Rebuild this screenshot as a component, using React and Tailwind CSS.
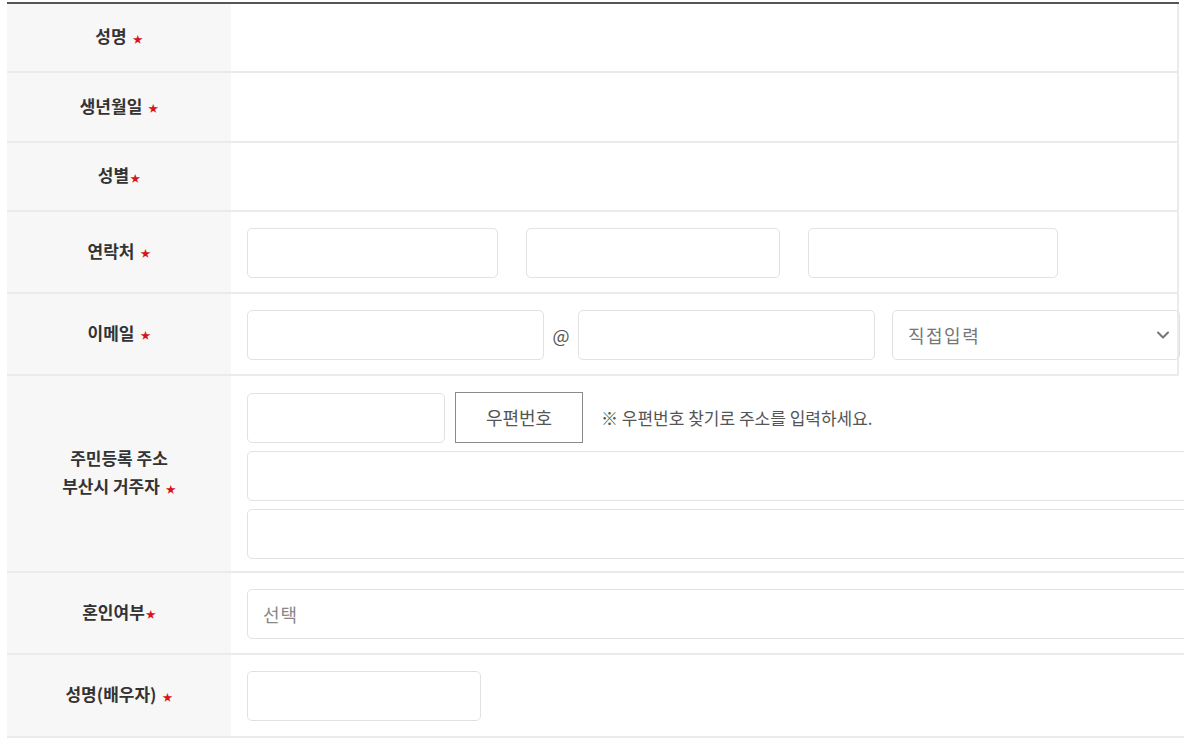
import { ChevronDown } from 'lucide-react';

const font = { fontFamily: '"Malgun Gothic", "Noto Sans CJK KR", "Noto Sans", sans-serif' };

function Star({ gap = true }) {
  return <span className={`text-[#d7141a] text-[10px] align-middle ${gap ? 'ml-[6px]' : 'ml-[1px]'}`}>★</span>;
}

function Row({ label, height, children, wide = false }) {
  return (
    <div className={`flex box-border border-b-2 border-[#ebebeb] ${height} ${wide ? 'w-[1190px]' : 'w-[1172px] border-r-2'}`}>
      <div className="w-[224px] shrink-0 bg-[#f7f7f7] flex items-center justify-center text-center text-[17px] font-bold text-[#333] leading-[28px]">
        {label}
      </div>
      <div className="flex-1 pl-4 pt-4">{children}</div>
    </div>
  );
}

function Input({ w }) {
  return <div className={`h-[50px] ${w} box-border border border-[#e2e2e2] rounded-[5px] bg-white`} />;
}

export default function App() {
  return (
    <div className="w-[1184px] h-[745px] overflow-hidden bg-white" style={font}>
      <div className="ml-[7px] mt-[2px] w-[1172px] border-t-2 border-[#555]" />
      <div className="ml-[7px]">
        <Row label={<span>성명<Star /></span>} height="h-[69px]" />
        <Row label={<span>생년월일<Star /></span>} height="h-[70px]" />
        <Row label={<span>성별<Star gap={false} /></span>} height="h-[69px]" />

        <Row label={<span>연락처<Star /></span>} height="h-[82px]">
          <div className="flex gap-[28px]">
            <Input w="w-[251px]" />
            <Input w="w-[254px]" />
            <Input w="w-[250px]" />
          </div>
        </Row>

        <Row label={<span>이메일<Star /></span>} height="h-[82px]">
          <div className="flex items-center">
            <Input w="w-[297px]" />
            <span className="w-[34px] text-center text-[18px] text-[#555]">@</span>
            <Input w="w-[297px]" />
            <div className="ml-[17px] h-[50px] w-[288px] box-border border border-[#e2e2e2] rounded-[5px] flex items-center justify-between pl-[15px] pr-[6px] text-[18px] text-[#777]">
              <span className="tracking-[1.5px]">직접입력</span>
              <ChevronDown size={20} strokeWidth={2.5} className="text-[#777]" />
            </div>
          </div>
        </Row>

        <Row
          wide
          label={<span>주민등록 주소<br />부산시 거주자<Star /></span>}
          height="h-[197px]"
        >
          <div className="flex flex-col gap-[8px]">
            <div className="flex items-center">
              <Input w="w-[198px]" />
              <div className="ml-[10px] h-[51px] w-[128px] box-border border border-[#8a8a8a] flex items-center justify-center text-[18px] text-[#555]">
                우편번호
              </div>
              <span className="ml-[18px] text-[17px] text-[#555]">※ 우편번호 찾기로 주소를 입력하세요.</span>
            </div>
            <Input w="w-full" />
            <Input w="w-full" />
          </div>
        </Row>

        <Row wide label={<span>혼인여부<Star gap={false} /></span>} height="h-[82px]">
          <div className="h-[50px] w-full box-border border border-[#e2e2e2] rounded-[5px] flex items-center pl-[15px] text-[18px] text-[#888] tracking-[1px]">
            선택
          </div>
        </Row>

        <Row wide label={<span>성명(배우자)<Star /></span>} height="h-[83px]">
          <Input w="w-[234px]" />
        </Row>
      </div>
    </div>
  );
}
